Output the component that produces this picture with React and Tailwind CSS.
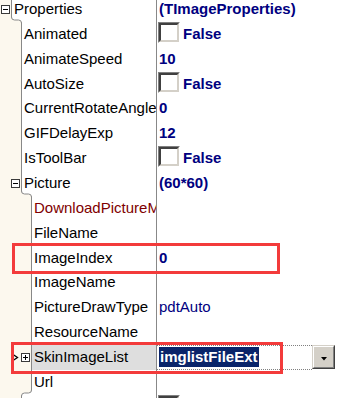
import React from "react";

const CREAM = "#fcf8ee";
const LINE = "#888888";

const gutterW = { 0: "w-[12px]", 1: "w-[22px]", 2: "w-[32px]" };

const rows = [
  { lvl: 0, name: "Properties", value: "(TImageProperties)", exp: "minus", corner: "out" },
  { lvl: 1, name: "Animated", check: true, value: "False" },
  { lvl: 1, name: "AnimateSpeed", value: "10" },
  { lvl: 1, name: "AutoSize", check: true, value: "False" },
  { lvl: 1, name: "CurrentRotateAngle", value: "0" },
  { lvl: 1, name: "GIFDelayExp", value: "12" },
  { lvl: 1, name: "IsToolBar", check: true, value: "False" },
  { lvl: 1, name: "Picture", value: "(60*60)", exp: "minus", corner: "out" },
  { lvl: 2, name: "DownloadPictureMode", red: true },
  { lvl: 2, name: "FileName" },
  { lvl: 2, name: "ImageIndex", value: "0" },
  { lvl: 2, name: "ImageName" },
  { lvl: 2, name: "PictureDrawType", value: "pdtAuto", plain: true },
  { lvl: 2, name: "ResourceName" },
  { lvl: 2, name: "SkinImageList", exp: "plus", selected: true, value: "imglistFileExt" },
  { lvl: 2, name: "Url", corner: "in" },
  { lvl: 1, name: "Stretch", check: true, value: "False" },
];

function ExpandBox({ kind }) {
  return (
    <svg width="9" height="9" viewBox="0 0 9 9" className="shrink-0">
      <rect x="0.5" y="0.5" width="8" height="8" fill="white" stroke="#3a3a3a" />
      <line x1="2" y1="4.5" x2="7" y2="4.5" stroke="black" />
      {kind === "plus" && <line x1="4.5" y1="2" x2="4.5" y2="7" stroke="black" />}
    </svg>
  );
}

function Corner({ dir, from }) {
  if (dir === "out") {
    const a = from + 0.5;
    const b = from + 10.5;
    const d = `M${a} 0 V3 Q${a} 6 ${a + 3} 6 H${b - 3} Q${b} 6 ${b} 9 V16`;
    return (
      <svg width="40" height="16" className="absolute left-0 bottom-[-8px] z-10">
        <path d={`${d} H0 V0 Z`} fill={CREAM} />
        <path d={d} fill="none" stroke={LINE} />
      </svg>
    );
  }
  const a = from + 0.5;
  const b = from - 9.5;
  const d = `M${a} 0 V3 Q${a} 6 ${a - 3} 6 H${b + 3} Q${b} 6 ${b} 9 V16`;
  return (
    <svg width="40" height="16" className="absolute left-0 bottom-[-8px] z-10">
      <path d={`${d} H${from + 1} V0 Z`} fill="white" />
      <path d={d} fill="none" stroke={LINE} />
    </svg>
  );
}

function CheckBox() {
  return (
    <div className="w-[22px] h-[21px] shrink-0 border-t border-l border-t-[#808080] border-l-[#808080] border-b border-r border-b-white border-r-white">
      <div className="w-full h-full bg-white border-t-2 border-l-2 border-t-[#404040] border-l-[#404040] border-b-2 border-r-2 border-b-[#d4d0c8] border-r-[#d4d0c8]" />
    </div>
  );
}

function Row({ r }) {
  const cornerX = r.lvl === 0 ? 11 : r.lvl === 1 ? 21 : 31;
  return (
    <div className={`flex h-[24.86px] leading-[24.86px] ${r.corner ? "relative" : ""}`}>
      <div className="flex w-[156px] shrink-0">
        <div
          className={`${gutterW[r.lvl]} shrink-0 bg-[#fcf8ee] border-r border-[#888] flex items-center justify-end pr-[1px]`}
        >
          {r.selected && (
            <svg width="7" height="7" viewBox="0 0 7 7" className="mr-[2px]">
              <path d="M1 0.5 L5.5 3.5 L1 6.5" fill="none" stroke="black" strokeWidth="1.3" />
            </svg>
          )}
          {r.exp && <ExpandBox kind={r.exp} />}
        </div>
        <div
          className={`flex-1 min-w-0 overflow-hidden whitespace-nowrap pl-[2px] ${
            r.selected ? "bg-[#dedede]" : "bg-white"
          } ${r.red ? "text-[#800000]" : "text-black"}`}
        >
          {r.name}
        </div>
      </div>
      <div className="flex-1 min-w-0 border-l border-[#888] bg-white flex whitespace-nowrap">
        {r.selected ? (
          <div className="flex flex-1 min-w-0">
            <div className="flex-1 flex items-center border-y border-dotted border-[#808080] pl-[2px]">
              <span className="bg-[#0a246a] text-white font-bold leading-[20px] px-[1px]">{r.value}</span>
            </div>
            <div className="w-[23px] h-[24px] shrink-0 border-t border-l border-t-[#d4d0c8] border-l-[#d4d0c8] border-b border-r border-b-[#404040] border-r-[#404040]">
              <div className="w-full h-full bg-[#d4d0c8] border-t border-l border-t-white border-l-white border-b border-r border-b-[#808080] border-r-[#808080] flex items-center justify-center">
                <svg width="6" height="4" viewBox="0 0 6 4" className="mt-[4px]">
                  <path d="M0 0 H6 L3 3.5 Z" fill="black" />
                </svg>
              </div>
            </div>
            <div className="w-[2px] shrink-0" />
          </div>
        ) : r.check ? (
          <div className="flex items-start pl-[1px]">
            <CheckBox />
            <span className="ml-[3px] font-bold text-[#000080]">{r.value}</span>
          </div>
        ) : (
          <span className={`pl-[2px] text-[#000080] ${r.plain ? "font-normal" : "font-bold"}`}>
            {r.value}
          </span>
        )}
      </div>
      {r.corner === "out" && <Corner dir="out" from={cornerX} />}
      {r.corner === "in" && <Corner dir="in" from={cornerX} />}
    </div>
  );
}

export default function App() {
  return (
    <div className="relative w-[337px] h-[398px] overflow-hidden bg-white font-['Liberation_Sans',Arial,sans-serif] text-[15px]">
      <div className="-mt-[3px]">
        {rows.map((r) => (
          <Row key={r.name} r={r} />
        ))}
      </div>
      <div className="absolute left-[12px] top-[243px] w-[268px] h-[31px] border-[3px] border-[#f33b3b] z-20" />
      <div className="absolute left-[11px] top-[342px] w-[272px] h-[32px] border-[3px] border-[#f33b3b] z-20" />
    </div>
  );
}
